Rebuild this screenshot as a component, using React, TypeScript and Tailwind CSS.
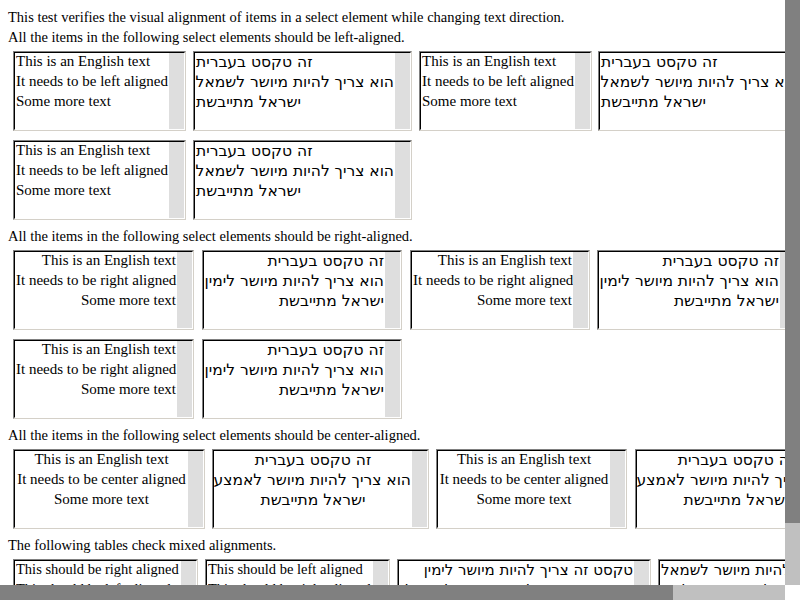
type Sel = {
  box: string;
  align: string;
  heb?: boolean;
  small?: boolean;
  lines: string[];
};

const EN_LEFT = ['This is an English text', 'It needs to be left aligned', 'Some more text'];
const HE_LEFT = ['זה טקסט בעברית', 'הוא צריך להיות מיושר לשמאל', 'ישראל מתייבשת'];
const EN_RIGHT = ['This is an English text', 'It needs to be right aligned', 'Some more text'];
const HE_RIGHT = ['זה טקסט בעברית', 'הוא צריך להיות מיושר לימין', 'ישראל מתייבשת'];
const EN_CENTER = ['This is an English text', 'It needs to be center aligned', 'Some more text'];
const HE_CENTER = ['זה טקסט בעברית', 'הוא צריך להיות מיושר לאמצע', 'ישראל מתייבשת'];

function textClass(heb?: boolean, small?: boolean) {
  if (heb) {
    return small
      ? "font-['DejaVu_Sans',sans-serif] text-[15px] leading-[18px]"
      : "font-['DejaVu_Sans',sans-serif] text-[15.5px] leading-[18px]";
  }
  return small
    ? "font-['Liberation_Serif',serif] text-[14.5px] leading-[16px]"
    : "font-['Liberation_Serif',serif] text-[15px] leading-[16px]";
}

function Select({ box, align, heb, small, lines }: Sel) {
  return (
    <div
      className={`flex h-[80px] shrink-0 border border-t-[#808080] border-l-[#808080] border-r-[#d4d0c8] border-b-[#d4d0c8] ${box}`}
    >
      <div className="flex min-w-0 flex-1 border border-t-black border-l-black border-r-white border-b-white">
        <div className="min-w-0 flex-1 overflow-hidden px-[1px]">
          {lines.map((l, i) => (
            <div
              key={i}
              dir={heb ? 'rtl' : 'ltr'}
              className={`h-[20px] whitespace-nowrap ${align} ${textClass(heb, small)}`}
            >
              {l}
            </div>
          ))}
        </div>
        <div className="w-[15px] shrink-0 bg-[#dedede]" />
      </div>
    </div>
  );
}

function SelectRow({ top, sels }: { top: string; sels: Sel[] }) {
  return (
    <div className={`flex h-[80px] flex-nowrap pl-[5px] ${top}`}>
      {sels.map((s, i) => (
        <Select key={i} {...s} />
      ))}
    </div>
  );
}

function Line({ children, top = '' }: { children: string; top?: string }) {
  return <div className={`h-[20px] whitespace-nowrap leading-[20px] ${top}`}>{children}</div>;
}

export default function App() {
  const leftA: Sel[] = [
    { box: 'w-[173px]', align: 'text-left', lines: EN_LEFT },
    { box: 'ml-[7px] w-[219px]', align: 'text-left', heb: true, lines: HE_LEFT },
  ];
  const rightA: Sel[] = [
    { box: 'w-[181px]', align: 'text-right', lines: EN_RIGHT },
    { box: 'ml-[8px] w-[200px]', align: 'text-right', heb: true, lines: HE_RIGHT },
  ];

  return (
    <div className="flex h-[600px] w-[800px] flex-col overflow-hidden bg-white text-black">
      <div className="flex min-h-0 flex-1">
        <div className="min-w-0 flex-1 overflow-hidden pl-[8px] pt-[7px] font-['Liberation_Serif',serif] text-[14.5px]">
          <Line>
            This test verifies the visual alignment of items in a select element while changing text direction.
          </Line>
          <Line>All the items in the following select elements should be left-aligned.</Line>

          <SelectRow
            top="mt-[4px]"
            sels={[
              ...leftA,
              { box: 'ml-[7px] w-[173px]', align: 'text-left', lines: EN_LEFT },
              { box: 'ml-[6px] w-[219px]', align: 'text-left', heb: true, lines: HE_LEFT },
            ]}
          />
          <SelectRow top="mt-[9px]" sels={leftA} />

          <Line top="mt-[6px]">All the items in the following select elements should be right-aligned.</Line>
          <SelectRow
            top="mt-[4px]"
            sels={[
              ...rightA,
              { box: 'ml-[8px] w-[180px]', align: 'text-right', lines: EN_RIGHT },
              { box: 'ml-[7px] w-[200px]', align: 'text-right', heb: true, lines: HE_RIGHT },
            ]}
          />
          <SelectRow top="mt-[9px]" sels={rightA} />

          <Line top="mt-[6px]">All the items in the following select elements should be center-aligned.</Line>
          <SelectRow
            top="mt-[4px]"
            sels={[
              { box: 'w-[192px]', align: 'text-center', lines: EN_CENTER },
              { box: 'ml-[7px] w-[217px]', align: 'text-center', heb: true, lines: HE_CENTER },
              { box: 'ml-[7px] w-[191px]', align: 'text-center', lines: EN_CENTER },
              { box: 'ml-[8px] w-[217px]', align: 'text-center', heb: true, lines: HE_CENTER },
            ]}
          />

          <Line top="mt-[6px]">The following tables check mixed alignments.</Line>
          <SelectRow
            top="mt-[4px]"
            sels={[
              {
                box: 'w-[185px]',
                align: 'text-left',
                small: true,
                lines: ['This should be right aligned', 'This should be left aligned'],
              },
              {
                box: 'ml-[7px] w-[185px]',
                align: 'text-left',
                small: true,
                lines: ['This should be left aligned', 'This should be right aligned'],
              },
              {
                box: 'ml-[7px] w-[254px]',
                align: 'text-right',
                heb: true,
                small: true,
                lines: ['טקסט זה צריך להיות מיושר לימין', 'טקסט זה צריך להיות מיושר לשמאל'],
              },
              {
                box: 'ml-[7px] w-[254px]',
                align: 'text-left',
                heb: true,
                small: true,
                lines: ['טקסט זה צריך להיות מיושר לשמאל', 'טקסט זה צריך להיות מיושר לימין'],
              },
            ]}
          />
        </div>

        {/* vertical scrollbar */}
        <div className="flex w-[15px] shrink-0 flex-col">
          <div className="h-[523px] bg-[#808080]" />
          <div className="flex-1 bg-[#c0c0c0]" />
        </div>
      </div>

      {/* horizontal scrollbar */}
      <div className="flex h-[15px] shrink-0">
        <div className="w-[673px] bg-[#808080]" />
        <div className="w-[112px] bg-[#c0c0c0]" />
        <div className="flex-1 bg-white" />
      </div>
    </div>
  );
}
